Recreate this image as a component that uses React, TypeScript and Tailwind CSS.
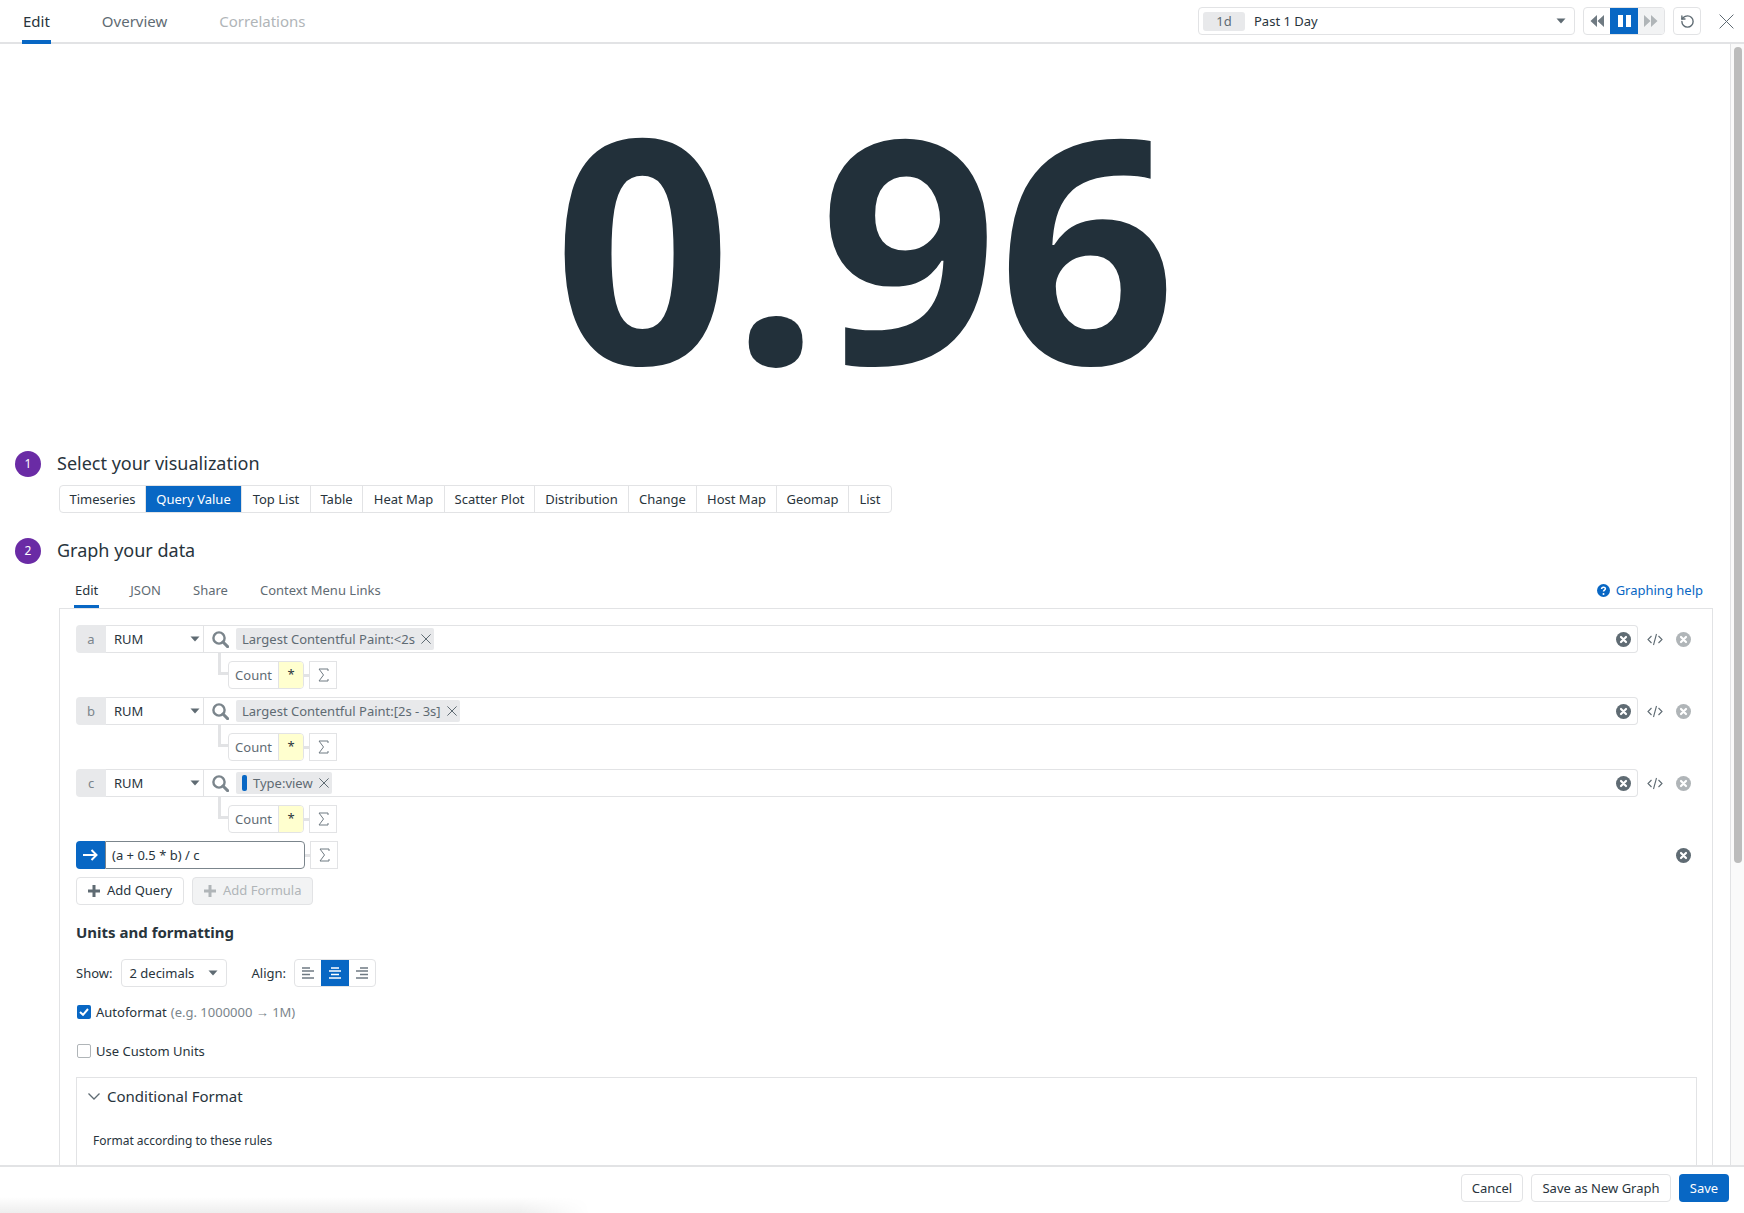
import { RotateCcw } from "lucide-react";

const vizTypes = [
  { label: "Timeseries", w: "w-[86px]" },
  { label: "Query Value", w: "w-[96px]", active: true },
  { label: "Top List", w: "w-[69px]" },
  { label: "Table", w: "w-[52px]" },
  { label: "Heat Map", w: "w-[82px]" },
  { label: "Scatter Plot", w: "w-[90px]" },
  { label: "Distribution", w: "w-[94px]" },
  { label: "Change", w: "w-[68px]" },
  { label: "Host Map", w: "w-[80px]" },
  { label: "Geomap", w: "w-[72px]" },
  { label: "List", w: "w-[42px]" },
];

const queries = [
  { id: "a", tag: "Largest Contentful Paint:<2s" },
  { id: "b", tag: "Largest Contentful Paint:[2s - 3s]" },
  { id: "c", tag: "Type:view", marker: true },
];

function Caret({ className = "" }: { className?: string }) {
  return (
    <svg width="10" height="6" viewBox="0 0 10 6" className={className}>
      <path d="M0.5 0.5h9L5 5.5z" fill="currentColor" />
    </svg>
  );
}

function ClearIcon({ className = "" }: { className?: string }) {
  return (
    <svg width="15" height="15" viewBox="0 0 15 15" className={className}>
      <circle cx="7.500" cy="7.500" r="7.500" fill="currentColor" />
      <path d="M5 5l5 5M10 5l-5 5" stroke="#fff" strokeWidth="2.200" strokeLinecap="round" />
    </svg>
  );
}

function CrossIcon({ size, className = "" }: { size: number; className?: string }) {
  return (
    <svg width={size} height={size} viewBox="0 0 10 10" fill="none" stroke="currentColor" strokeWidth={10 / size} className={className}>
      <path d="M0.400 0.400l9.200 9.200M9.600 0.400l-9.200 9.200" />
    </svg>
  );
}

function PlusIcon({ className = "" }: { className?: string }) {
  return (
    <svg width="12" height="12" viewBox="0 0 12 12" className={className}>
      <path d="M4.500 0h3v4.500H12v3H7.500V12h-3V7.500H0v-3h4.500z" fill="currentColor" />
    </svg>
  );
}

function SearchIcon() {
  return (
    <svg width="17" height="17" viewBox="0 0 17 17" fill="none" stroke="#7b858c">
      <circle cx="7" cy="7" r="5.600" strokeWidth="2.400" />
      <path d="M11 11l4.600 4.600" strokeWidth="3" strokeLinecap="round" />
    </svg>
  );
}

function SigmaBox() {
  return (
    <div className="flex h-[28px] w-[28px] items-center justify-center border border-[#e2e3e5] bg-white">
      <svg width="11" height="14" viewBox="0 0 11 14" fill="none" stroke="#6f7a82" strokeWidth="1">
        <path d="M10 3V1H1l4.500 6L1 13h9v-2" />
      </svg>
    </div>
  );
}

function CodeIcon() {
  return (
    <svg width="16" height="13" viewBox="0 0 16 13" fill="none" stroke="#5f6b73" strokeWidth="1.100">
      <path d="M4.500 3L1 6.500 4.500 10M11.500 3L15 6.500 11.500 10M9.500 1L6.500 12" />
    </svg>
  );
}

function AlignIcon({ d, color }: { d: string; color: string }) {
  return (
    <svg width="12" height="12" viewBox="0 0 12 12" stroke={color} strokeWidth="1.600">
      <path d={d} />
    </svg>
  );
}

function QueryRow({ id, tag, marker }: { id: string; tag: string; marker?: boolean }) {
  return (
    <div className="flex flex-col">
      <div className="flex h-[28px] items-center">
        <div className="flex h-full w-[30px] items-center justify-center rounded-l-[4px] bg-[#e8e9eb] pt-px text-[#7b858c]">{id}</div>
        <div className="flex h-full w-[98px] items-center justify-between border-y border-r border-[#e2e3e5] pl-[8px] pr-[3px] text-[#28343c]">
          <span className="pt-px">RUM</span>
          <Caret className="text-[#5f6b73]" />
        </div>
        <div className="flex h-full w-[1434px] items-center justify-between rounded-r-[4px] border-y border-r border-[#e2e3e5] pl-[8px] pr-[6px]">
          <div className="flex items-center gap-[7px]">
            <SearchIcon />
            <div className="flex h-[22px] items-center rounded-[2px] bg-[#e8e9eb] pl-[6px] pr-[3px] text-[#5f6b73]">
              {marker && <span className="mr-[6px] h-[16px] w-[5px] rounded-[2px] bg-[#0867c4]" />}
              <span className="pt-px">{tag}</span>
              <CrossIcon size={10} className="ml-[6px]" />
            </div>
          </div>
          <ClearIcon className="text-[#5f6b73]" />
        </div>
        <div className="ml-[9px] flex w-[16px] justify-center"><CodeIcon /></div>
        <ClearIcon className="ml-[13px] text-[#b0b5b8]" />
      </div>
      <div className="relative mt-[8px] flex h-[28px] items-center pl-[152px]">
        <span className="absolute left-[142px] top-[-9px] h-[23px] w-[10px] border-b-[3px] border-l-[3px] border-[#e2e3e5]" />
        <div className="flex h-full w-[76px] overflow-hidden rounded-[4px] border border-[#e2e3e5] bg-white">
          <div className="flex flex-1 items-center justify-center pt-px text-[#5f6b73]">Count</div>
          <div className="flex w-[25px] items-center justify-center border-l border-[#e2e3e5] bg-[#ffffcf] text-[#28343c]">*</div>
        </div>
        <div className="h-[3px] w-[5px] bg-[#e2e3e5]" />
        <SigmaBox />
      </div>
    </div>
  );
}

export default function App() {
  return (
    <div className="flex h-screen flex-col overflow-hidden bg-white font-['Noto_Sans',sans-serif] text-[13px] text-[#28343c]">
      <header className="flex h-[44px] shrink-0 items-center justify-between border-b-2 border-[#e2e3e5] pl-[23px] pr-[10px]">
        <nav className="flex h-full items-center gap-[52px] text-[15px]">
          <div className="relative flex h-full items-center text-[#28343c]">
            Edit
            <span className="absolute -left-[1px] -right-[1px] -bottom-[2px] h-[4px] bg-[#0867c4]" />
          </div>
          <span className="text-[#5f6b73]">Overview</span>
          <span className="text-[#b0b5b8]">Correlations</span>
        </nav>
        <div className="flex items-center">
          <div className="flex h-[28px] w-[377px] items-center justify-between rounded-[4px] border border-[#e2e3e5] pl-[4px] pr-[8px]">
            <div className="flex items-center gap-[9px]">
              <span className="flex h-[19px] w-[42px] items-center justify-center rounded-[3px] bg-[#e8e9eb] pt-px text-[#5f6b73]">1d</span>
              <span className="pt-px">Past 1 Day</span>
            </div>
            <Caret className="text-[#5f6b73]" />
          </div>
          <div className="ml-[8px] flex h-[28px] w-[82px] overflow-hidden rounded-[4px] border border-[#e2e3e5]">
            <div className="flex flex-1 items-center justify-center text-[#6f7a82]">
              <svg width="14" height="12" viewBox="0 0 14 12" fill="currentColor"><path d="M7 0v12L0.500 6zM14 0v12L7.500 6z" /></svg>
            </div>
            <div className="flex w-[28px] items-center justify-center gap-[3px] bg-[#0867c4]">
              <span className="h-[12px] w-[5px] bg-white" />
              <span className="h-[12px] w-[5px] bg-white" />
            </div>
            <div className="flex flex-1 items-center justify-center bg-[#f2f3f4] text-[#b0b5b8]">
              <svg width="14" height="12" viewBox="0 0 14 12" fill="currentColor"><path d="M0 0v12l6.500-6zM7 0v12l6.500-6z" /></svg>
            </div>
          </div>
          <div className="ml-[8px] flex h-[28px] w-[28px] items-center justify-center rounded-[4px] border border-[#e2e3e5] text-[#5f6b73]">
            <RotateCcw size={15} strokeWidth={2.2} />
          </div>
          <CrossIcon size={15} className="ml-[18px] text-[#5f6b73]" />
        </div>
      </header>

      <div className="flex min-h-0 flex-1">
        <main className="min-w-0 flex-1">
          <div className="flex h-[407px] items-center justify-center">
            <span className="mb-[9px] text-[312px] font-bold leading-[1.2] text-[#22303a]">0.96</span>
          </div>

          <section className="flex h-[26px] items-center pl-[15px]">
            <span className="flex h-[26px] w-[26px] items-center justify-center rounded-full bg-[#6a2ba5] text-[12px] text-white">1</span>
            <h2 className="ml-[16px] pb-[2px] text-[18px] text-[#28343c]">Select your visualization</h2>
          </section>
          <div className="ml-[59px] mt-[8px] flex h-[28px] w-[833px] overflow-hidden rounded-[4px] border border-[#e2e3e5]">
            {vizTypes.map((v) => (
              <div
                key={v.label}
                className={`flex items-center justify-center border-r border-[#e2e3e5] pt-px last:border-r-0 ${v.w} ${v.active ? "bg-[#0867c4] text-white" : "text-[#28343c]"}`}
              >
                {v.label}
              </div>
            ))}
          </div>

          <section className="mt-[25px] flex h-[26px] items-center pl-[15px]">
            <span className="flex h-[26px] w-[26px] items-center justify-center rounded-full bg-[#6a2ba5] text-[12px] text-white">2</span>
            <h2 className="ml-[16px] pb-[2px] text-[18px] text-[#28343c]">Graph your data</h2>
          </section>

          <div className="ml-[59px] mr-[17px] mt-[13px] flex h-[31px] items-start justify-between pl-[16px] pr-[10px]">
            <div className="flex gap-[32px] text-[#5f6b73]">
              <div className="relative h-[31px] pt-[4px] text-[#28343c]">
                Edit
                <span className="absolute -left-[1px] -right-[1px] bottom-0 h-[3px] bg-[#0867c4]" />
              </div>
              <span className="pt-[4px]">JSON</span>
              <span className="pt-[4px]">Share</span>
              <span className="pt-[4px]">Context Menu Links</span>
            </div>
            <div className="flex items-center gap-[6px] pt-[4px] text-[#0867c4]">
              <svg width="13" height="13" viewBox="0 0 13 13">
                <circle cx="6.500" cy="6.500" r="6.500" fill="currentColor" />
                <path d="M4.600 5c0-2.400 3.800-2.400 3.800-.2 0 1.400-1.900 1.400-1.900 2.800" fill="none" stroke="#fff" strokeWidth="1.500" />
                <circle cx="6.500" cy="9.900" r="1" fill="#fff" />
              </svg>
              Graphing help
            </div>
          </div>

          <div className="ml-[59px] mr-[17px] border border-[#e2e3e5] pl-[16px] pt-[16px]">
            <div className="flex flex-col gap-[8px]">
              {queries.map((q) => (
                <QueryRow key={q.id} {...q} />
              ))}
              <div className="flex h-[28px] items-center">
                <div className="flex h-full w-[29px] items-center justify-center rounded-l-[4px] bg-[#0867c4] text-white">
                  <svg width="15" height="12" viewBox="0 0 15 12" fill="none" stroke="currentColor" strokeWidth="2">
                    <path d="M0 6h13M8.500 1l5 5-5 5" />
                  </svg>
                </div>
                <div className="flex h-full w-[200px] items-center rounded-r-[4px] border border-[#7b858c] pl-[6px] pt-px">(a + 0.5 * b) / c</div>
                <div className="h-[3px] w-[5px] bg-[#e2e3e5]" />
                <SigmaBox />
                <ClearIcon className="ml-[1338px] text-[#5f6b73]" />
              </div>
              <div className="flex gap-[8px]">
                <div className="flex h-[28px] w-[108px] items-center gap-[7px] rounded-[4px] border border-[#e2e3e5] pl-[11px] text-[#28343c]">
                  <PlusIcon className="text-[#5f6b73]" />
                  Add Query
                </div>
                <div className="flex h-[28px] w-[121px] items-center gap-[7px] rounded-[4px] border border-[#e2e3e5] bg-[#f2f3f4] pl-[11px] text-[#b0b5b8]">
                  <PlusIcon />
                  Add Formula
                </div>
              </div>
            </div>

            <h3 className="mt-[17px] text-[15px] font-bold leading-[20px] text-[#28343c]">Units and formatting</h3>

            <div className="mt-[17px] flex h-[28px] items-center">
              <span className="pt-px">Show:</span>
              <div className="ml-[9px] flex h-full w-[106px] items-center justify-between rounded-[4px] border border-[#e2e3e5] pl-[7px] pr-[8px]">
                <span className="pt-px">2 decimals</span>
                <Caret className="text-[#5f6b73]" />
              </div>
              <span className="ml-[24px] pt-px">Align:</span>
              <div className="ml-[8px] flex h-full w-[82px] overflow-hidden rounded-[4px] border border-[#e2e3e5]">
                <div className="flex flex-1 items-center justify-center">
                  <AlignIcon color="#6f7a82" d="M0 1h8M0 4h12M0 7.500h8M0 11h12" />
                </div>
                <div className="flex w-[28px] items-center justify-center bg-[#0867c4]">
                  <AlignIcon color="#fff" d="M2 1h8M0 4h12M2 7.500h8M0 11h12" />
                </div>
                <div className="flex flex-1 items-center justify-center">
                  <AlignIcon color="#6f7a82" d="M4 1h8M0 4h12M4 7.500h8M0 11h12" />
                </div>
              </div>
            </div>

            <div className="mt-[15px] flex h-[20px] items-center">
              <span className="ml-px flex h-[14px] w-[14px] items-center justify-center rounded-[2px] bg-[#0867c4]">
                <svg width="10" height="8" viewBox="0 0 10 8" fill="none" stroke="#fff" strokeWidth="2"><path d="M1 4l3 2.800L9 1" /></svg>
              </span>
              <span className="ml-[5px] pt-px">Autoformat</span>
              <span className="ml-[4px] pt-px text-[#7b858c]">(e.g. 1000000 → 1M)</span>
            </div>

            <div className="mt-[19px] flex h-[20px] items-center">
              <span className="ml-px h-[14px] w-[14px] rounded-[2px] border border-[#b0b5b8]" />
              <span className="ml-[5px] pt-px">Use Custom Units</span>
            </div>

            <div className="mr-[15px] mt-[16px] h-[120px] border border-[#e2e3e5]">
              <div className="flex h-[37px] items-center pl-[11px] text-[15px]">
                <svg width="12" height="7" viewBox="0 0 12 7" fill="none" stroke="#5f6b73" strokeWidth="1.300"><path d="M0.500 0.500L6 6l5.500-5.500" /></svg>
                <span className="ml-[7px]">Conditional Format</span>
              </div>
              <p className="mt-[17px] pl-[16px] text-[12px]">Format according to these rules</p>
            </div>
          </div>
        </main>

        <div className="w-[14px] shrink-0 border-l border-[#e2e3e5] bg-[#fafafa] pl-[3px] pr-[2px] pt-[3px]">
          <div className="h-[816px] rounded-full bg-[#bcbcbc]" />
        </div>
      </div>

      <footer className="relative z-10 flex h-[48px] shrink-0 items-start justify-end gap-[8px] border-t-2 border-[#e2e3e5] bg-white pr-[15px] pt-[7px]">
        <span className="absolute bottom-0 left-0 h-[16px] w-[590px] bg-gradient-to-b from-white to-[#eeeeee] [mask-image:linear-gradient(to_right,black_88%,transparent)]" />
        <button className="h-[28px] w-[62px] rounded-[4px] border border-[#e2e3e5] pt-px">Cancel</button>
        <button className="h-[28px] w-[140px] rounded-[4px] border border-[#e2e3e5] pt-px">Save as New Graph</button>
        <button className="h-[28px] w-[50px] rounded-[4px] bg-[#0867c4] pt-px text-white">Save</button>
      </footer>
    </div>
  );
}
